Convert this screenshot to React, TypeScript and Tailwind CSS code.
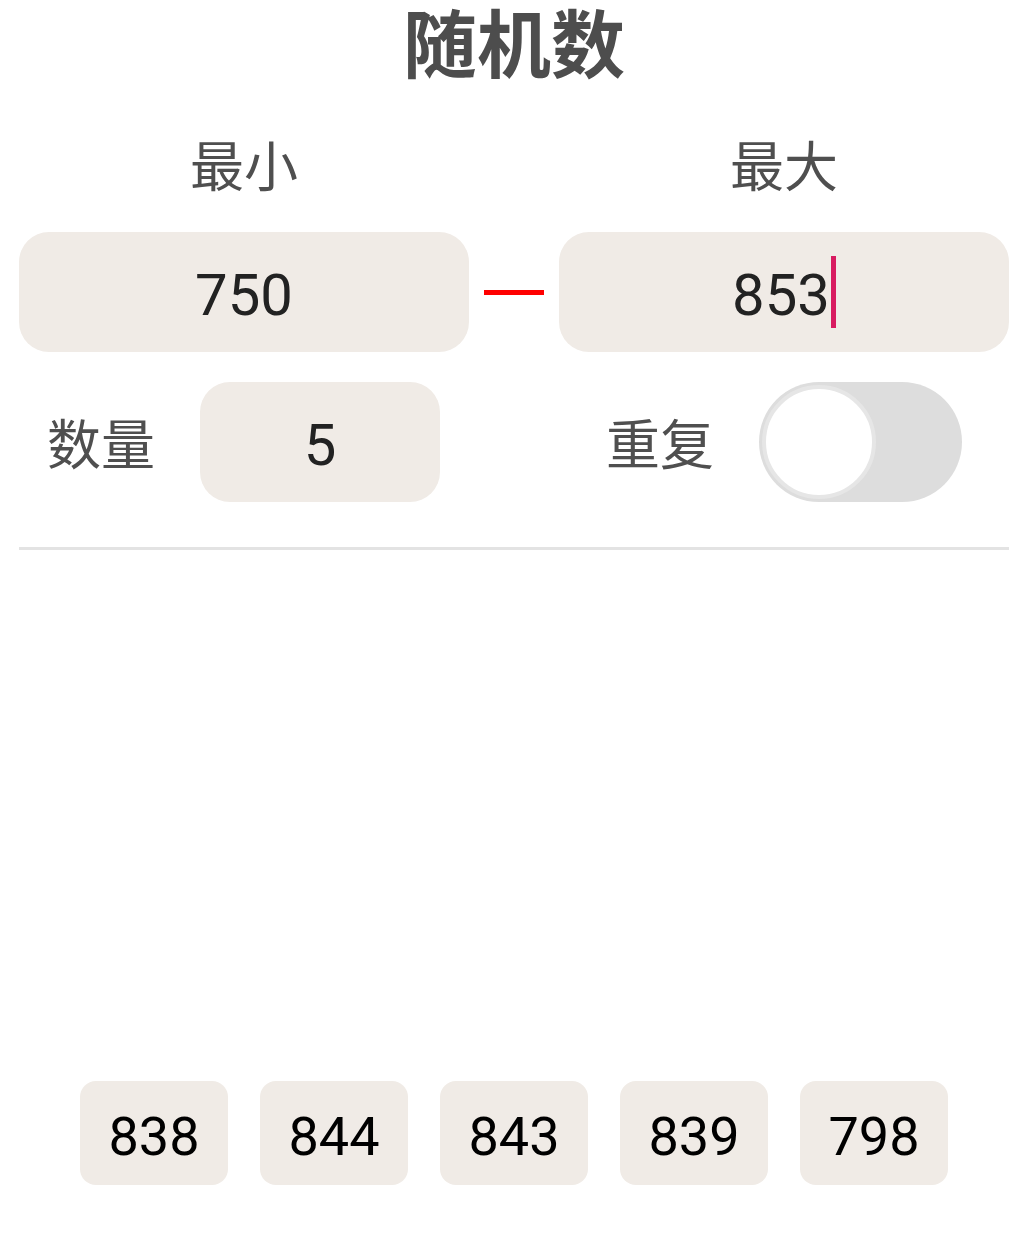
import { useState } from "react";

const cjk = "font-['Noto_Sans_CJK_SC','Noto_Sans',sans-serif]";
const num = "font-['Roboto','Noto_Sans_CJK_SC',sans-serif]";

export default function App() {
  const [min, setMin] = useState("750");
  const [max, setMax] = useState("853");
  const [count, setCount] = useState("5");
  const [repeat, setRepeat] = useState(false);
  const results = [838, 844, 843, 839, 798];

  return (
    <div className="min-h-[1239px] w-[1022px] bg-white pl-[19px] pr-[13px]">
      <h1 className={`${cjk} flex h-[90px] items-start justify-center overflow-visible text-[74px] font-bold leading-[80px] text-[#4d4d4d]`}>
        <span className="block">随机数</span>
      </h1>

      <div className="mt-[34px] flex">
        <div className={`${cjk} w-[450px] text-center text-[54px] leading-[80px] text-[#4f4f4f]`}>最小</div>
        <div className="w-[90px]" />
        <div className={`${cjk} w-[450px] text-center text-[54px] leading-[80px] text-[#4f4f4f]`}>最大</div>
      </div>

      <div className="mt-[28px] flex items-center">
        <div className="flex h-[120px] w-[450px] items-center justify-center rounded-[30px] bg-[#f0ebe6] pt-[6px]">
          <input
            value={min}
            onChange={(e) => setMin(e.target.value)}
            className={`${num} w-full bg-transparent text-center text-[58px] text-[#222] outline-none`}
          />
        </div>
        <div className="flex w-[90px] justify-center">
          <div className="h-[5px] w-[60px] bg-[#ff0000]" />
        </div>
        <div className="relative flex h-[120px] w-[450px] items-center justify-center rounded-[30px] bg-[#f0ebe6]">
          <span className={`${num} pt-[6px] text-[58px] leading-none text-[#222]`}>{max}</span>
          <span className="ml-[1px] h-[72px] w-[5px] bg-[#d81b60]" />
          <input
            value={max}
            onChange={(e) => setMax(e.target.value)}
            className="absolute inset-0 opacity-0"
          />
        </div>
      </div>

      <div className="mt-[30px] flex h-[120px] items-center">
        <span className={`${cjk} ml-[28px] text-[54px] leading-none text-[#4f4f4f]`}>数量</span>
        <div className="ml-[45px] flex h-[120px] w-[240px] items-center justify-center rounded-[30px] bg-[#f0ebe6] pt-[6px]">
          <input
            value={count}
            onChange={(e) => setCount(e.target.value)}
            className={`${num} w-full bg-transparent text-center text-[58px] text-[#222] outline-none`}
          />
        </div>
        <span className={`${cjk} ml-[166px] text-[54px] leading-none text-[#4f4f4f]`}>重复</span>
        <button
          onClick={() => setRepeat(!repeat)}
          className={`ml-[45px] flex h-[120px] w-[203px] items-center rounded-full p-[3px] ${repeat ? "bg-[#d81b60] justify-end" : "bg-[#dddddd] justify-start"}`}
        >
          <span className="h-[114px] w-[114px] rounded-full border-[4px] border-[#e6e6e6] bg-white" />
        </button>
      </div>

      <div className="mt-[45px] h-[3px] w-full bg-[#e3e3e3]" />

      <div className="mt-[531px] flex justify-center gap-[32px]">
        {results.map((n, i) => (
          <div
            key={i}
            className={`${num} flex h-[104px] w-[148px] items-center justify-center rounded-[16px] bg-[#f0ebe6] pt-[6px] text-[54px] text-black`}
          >
            {n}
          </div>
        ))}
      </div>
    </div>
  );
}
